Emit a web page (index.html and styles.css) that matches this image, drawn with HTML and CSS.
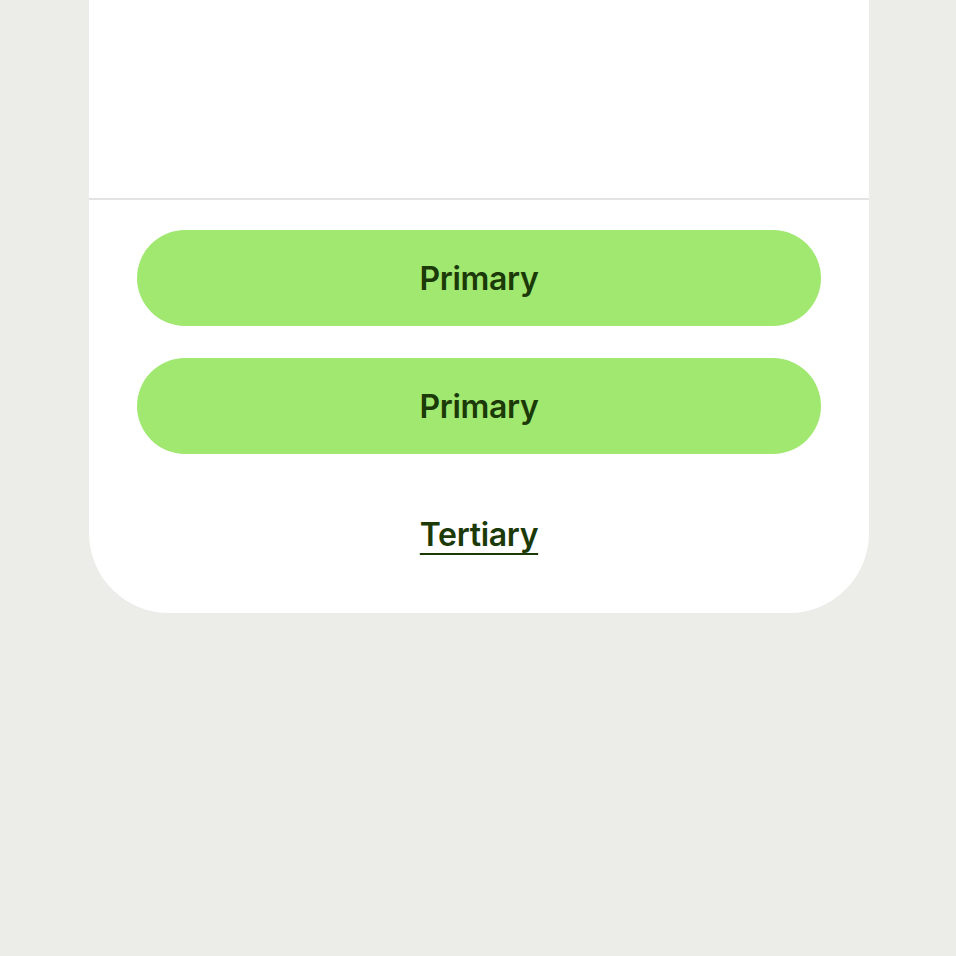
FILE: index.html
```html
<!DOCTYPE html>
<html lang="en">
<head>
    <meta charset="UTF-8">
    <meta name="viewport" content="width=device-width, initial-scale=1.0">
    <title>Actions</title>
    <link rel="stylesheet" href="styles.css">
</head>
<body>
    <div class="sheet">
        <div class="sheet-body"></div>
        <div class="sheet-actions">
            <button class="btn btn-primary">Primary</button>
            <button class="btn btn-primary">Primary</button>
            <button class="btn btn-tertiary">Tertiary</button>
        </div>
    </div>
</body>
</html>
```

FILE: styles.css
```css
* {
    margin: 0;
    padding: 0;
    box-sizing: border-box;
}

body {
    background-color: #ecede8;
    font-family: 'Inter', 'Noto Sans', sans-serif;
    color: #1b3a08;
}

.sheet {
    width: 780px;
    margin-left: 89px;
    background: #fff;
    border-radius: 0 0 80px 80px;
}

.sheet-body {
    height: 200px;
    border-bottom: 2px solid #e3e3e3;
}

.sheet-actions {
    display: flex;
    flex-direction: column;
    gap: 32px;
    padding: 30px 48px 31px;
}

.btn {
    height: 96px;
    border: none;
    border-radius: 48px;
    font-family: inherit;
    font-size: 32px;
    font-weight: 600;
    letter-spacing: -0.01em;
    color: #1b3a08;
    cursor: pointer;
}

.btn-primary {
    background: #a0e870;
}

.btn-tertiary {
    background: transparent;
    text-decoration: underline;
    text-decoration-thickness: 2px;
    text-decoration-skip-ink: none;
    text-underline-offset: 7px;
}
```
